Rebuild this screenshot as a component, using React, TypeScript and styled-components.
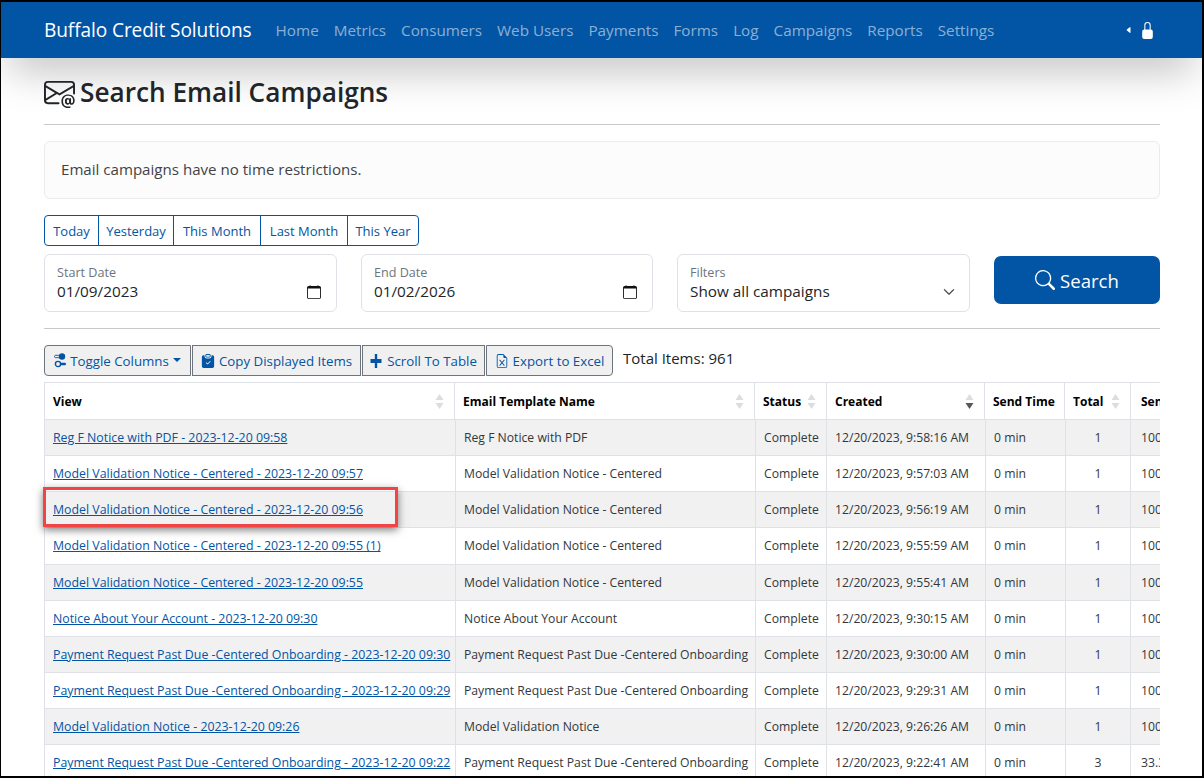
import React from "react";
import styled, { createGlobalStyle } from "styled-components";
import { BsEnvelopeAt, BsClipboardCheckFill, BsFileEarmarkExcel, BsSearch, BsLockFill, BsCaretLeftFill, BsChevronDown, BsCalendar } from "react-icons/bs";

const FONT = `"Open Sans", "Noto Sans", sans-serif`;

const Global = createGlobalStyle`
  html, body { margin: 0; padding: 0; background: #fff; overflow: hidden; }
  * { box-sizing: border-box; }
`;

const Frame = styled.div`
  width: 1204px;
  height: 778px;
  border-style: solid;
  border-color: #000;
  border-width: 2px 2px 2px 1px;
  overflow: hidden;
  font-family: ${FONT};
  color: #212529;
  background: #fff;
  display: flex;
  flex-direction: column;
`;

const NavBar = styled.nav`
  flex: 0 0 56px;
  background: #0254a4;
  display: flex;
  align-items: center;
  padding: 0 0 0 43px;
  box-shadow: 0 20px 42px -8px rgba(0, 0, 0, 0.26);
`;

const Brand = styled.span`
  color: #fff;
  font-size: 19.1px;
  letter-spacing: -0.1px;
  margin-right: 24px;
`;

const NavLink = styled.span`
  color: rgba(255, 255, 255, 0.55);
  font-size: 15.25px;
  margin-right: 15px;
`;

const NavRight = styled.div`
  margin-left: auto;
  display: flex;
  align-items: center;
  color: #fff;
  gap: 6px;
  padding-right: 46px;
`;

const Main = styled.main`
  padding: 0 42px 0 43px;
  display: flex;
  flex-direction: column;
`;

const Title = styled.h1`
  margin: 16px 0 0;
  font-size: 26.2px;
  line-height: 36px;
  font-weight: 600;
  color: #212529;
  display: flex;
  align-items: center;
  gap: 5px;
`;

const Rule = styled.hr<{ $top: number }>`
  width: 100%;
  border: 0;
  border-top: 1px solid #c9c9c9;
  margin: ${(p) => p.$top}px 0 16px;
`;

const Note = styled.div`
  height: 58px;
  border: 1px solid #e9ebee;
  border-radius: 6px;
  background: #fcfcfc;
  display: flex;
  align-items: center;
  padding: 0 16px 2px;
  font-size: 15.1px;
  color: #3f4347;
  margin-bottom: 16px;
`;

const RangeGroup = styled.div`
  display: inline-flex;
  align-self: flex-start;
  height: 31px;
  border: 1px solid #0254a4;
  border-radius: 4px;
  overflow: hidden;
`;

const RangeButton = styled.span<{ $w: number }>`
  width: ${(p) => p.$w}px;
  display: flex;
  align-items: center;
  justify-content: center;
  color: #0254a4;
  font-size: 13px;
  & + & { border-left: 1px solid #0254a4; }
`;

const FieldRow = styled.div`
  display: grid;
  grid-template-columns: 293px 292px 293px 166px;
  gap: 24px;
  margin-top: 8px;
  align-items: start;
`;

const Field = styled.div<{ $right: number }>`
  height: 58px;
  border: 1px solid #dee2e6;
  border-radius: 6px;
  padding: 9px ${(p) => p.$right}px 0 12px;
`;

const FieldLabel = styled.div`
  font-size: 12.6px;
  line-height: 17px;
  color: #6c757d;
`;

const FieldValue = styled.div`
  font-size: 15.3px;
  line-height: 21px;
  color: #212529;
  display: flex;
  align-items: center;
  justify-content: space-between;
`;

const SearchButton = styled.div`
  height: 48px;
  margin-top: 2px;
  background: #0254a4;
  border-radius: 7px;
  color: #fff;
  font-size: 18.6px;
  display: flex;
  align-items: center;
  justify-content: center;
  gap: 5px;
`;

const Toolbar = styled.div`
  display: flex;
  align-items: flex-start;
  height: 37px;
`;

const ToolButton = styled.span<{ $w: number; $first?: boolean; $last?: boolean; $gap?: number }>`
  width: ${(p) => p.$w}px;
  height: 31px;
  margin-right: 1px;
  background: #f0f0f1;
  border: 1px solid #6c757d;
  border-radius: ${(p) => (p.$first ? "4px 0 0 4px" : p.$last ? "0 4px 4px 0" : "0")};
  color: #0254a4;
  font-size: 13.3px;
  display: flex;
  align-items: center;
  justify-content: center;
  gap: ${(p) => p.$gap ?? 4}px;
  white-space: nowrap;
`;

const Caret = styled.span`
  width: 0;
  height: 0;
  border-left: 4px solid transparent;
  border-right: 4px solid transparent;
  border-top: 4px solid #0254a4;
  position: relative;
  top: -1px;
`;

const TotalItems = styled.span`
  font-size: 15px;
  margin-left: 9px;
  line-height: 27px;
  color: #212529;
`;

const TableWrap = styled.div`
  overflow: hidden;
  width: 100%;
`;

const Table = styled.table`
  table-layout: fixed;
  border-collapse: collapse;
  width: 1200px;
  font-size: 12.2px;
`;

const BodyTable = styled(Table)`
  margin-top: -1px;
`;

const Th = styled.th<{ $pad?: number }>`
  height: 37px;
  border: 1px solid #dee2e6;
  text-align: left;
  padding: 0 8px 0 ${(p) => p.$pad ?? 8}px;
  font-size: 12px;
  font-weight: 700;
  color: #000;
  position: relative;
  white-space: nowrap;
`;

const SortMark = styled.svg`
  position: absolute;
  right: 10px;
  top: 10px;
  width: 9px;
  height: 17px;
`;

const Row = styled.tr<{ $odd: boolean }>`
  height: 36.15px;
  background: ${(p) => (p.$odd ? "#f1f1f2" : "#fff")};
`;

const Td = styled.td<{ $center?: boolean; $pad?: number }>`
  border: 1px solid #dee2e6;
  padding: 0 8px 0 ${(p) => p.$pad ?? 8}px;
  white-space: nowrap;
  overflow: hidden;
  color: #33373b;
  text-align: ${(p) => (p.$center ? "center" : "left")};
`;

const Link = styled.a`
  color: #0254a4;
  font-size: 12.35px;
  text-decoration: underline;
`;

const TableArea = styled.div`
  position: relative;
`;

const Callout = styled.div`
  position: absolute;
  left: -1px;
  top: 105px;
  width: 355px;
  height: 40px;
  border: 3px solid #f24444;
  box-shadow: 0 3px 8px rgba(0, 0, 0, 0.5);
`;

const ToggleIcon = () => (
  <svg width="12" height="15" viewBox="0 0 12 15" fill="none">
    <circle cx="8" cy="3.5" r="3.2" fill="#0254a4" />
    <rect x="0.5" y="2.3" width="5" height="2.4" rx="1.2" stroke="#0254a4" strokeWidth="0.9" />
    <circle cx="4" cy="11" r="2.6" stroke="#0254a4" strokeWidth="1.4" />
    <rect x="6.5" y="9.8" width="5.5" height="2.4" rx="1.2" fill="#0254a4" />
  </svg>
);

const ScrollIcon = () => (
  <svg width="12" height="14" viewBox="0 0 12 14">
    <rect x="0.5" y="5" width="11" height="4" fill="#0254a4" />
    <rect x="4.8" y="0" width="2.4" height="14" fill="#0254a4" />
  </svg>
);

const Sort = ({ down }: { down?: boolean }) => (
  <SortMark viewBox="0 0 9 17">
    <path d="M4.5 1 L8.5 7 L0.5 7 Z" fill="#dcdde0" />
    <path d="M0.5 10 L8.5 10 L4.5 16 Z" fill={down ? "#55595e" : "#dcdde0"} />
  </SortMark>
);

const navItems = ["Home", "Metrics", "Consumers", "Web Users", "Payments", "Forms", "Log", "Campaigns", "Reports", "Settings"];
const ranges: [string, number][] = [["Today", 53], ["Yesterday", 75], ["This Month", 87], ["Last Month", 87], ["This Year", 71]];

const rows: [string, string, string, string, string][] = [
  ["Reg F Notice with PDF - 2023-12-20 09:58", "Reg F Notice with PDF", "12/20/2023, 9:58:16 AM", "1", "100"],
  ["Model Validation Notice - Centered - 2023-12-20 09:57", "Model Validation Notice - Centered", "12/20/2023, 9:57:03 AM", "1", "100"],
  ["Model Validation Notice - Centered - 2023-12-20 09:56", "Model Validation Notice - Centered", "12/20/2023, 9:56:19 AM", "1", "100"],
  ["Model Validation Notice - Centered - 2023-12-20 09:55 (1)", "Model Validation Notice - Centered", "12/20/2023, 9:55:59 AM", "1", "100"],
  ["Model Validation Notice - Centered - 2023-12-20 09:55", "Model Validation Notice - Centered", "12/20/2023, 9:55:41 AM", "1", "100"],
  ["Notice About Your Account - 2023-12-20 09:30", "Notice About Your Account", "12/20/2023, 9:30:15 AM", "1", "100"],
  ["Payment Request Past Due -Centered Onboarding - 2023-12-20 09:30", "Payment Request Past Due -Centered Onboarding", "12/20/2023, 9:30:00 AM", "1", "100"],
  ["Payment Request Past Due -Centered Onboarding - 2023-12-20 09:29", "Payment Request Past Due -Centered Onboarding", "12/20/2023, 9:29:31 AM", "1", "100"],
  ["Model Validation Notice - 2023-12-20 09:26", "Model Validation Notice", "12/20/2023, 9:26:26 AM", "1", "100"],
  ["Payment Request Past Due -Centered Onboarding - 2023-12-20 09:22", "Payment Request Past Due -Centered Onboarding", "12/20/2023, 9:22:41 AM", "3", "33.3"],
];

const headCols = [410, 300, 72, 158, 80, 66, 114];
const bodyCols = [411, 300, 71, 159, 80, 65, 114];

const Cols = ({ widths }: { widths: number[] }) => (
  <colgroup>
    {widths.map((c, i) => <col key={i} style={{ width: c }} />)}
  </colgroup>
);

export default function App() {
  return (
    <Frame>
      <Global />
      <NavBar>
        <Brand>Buffalo Credit Solutions</Brand>
        {navItems.map((n) => <NavLink key={n}>{n}</NavLink>)}
        <NavRight>
          <BsCaretLeftFill size={8} />
          <BsLockFill size={17} />
        </NavRight>
      </NavBar>
      <Main>
        <Title><BsEnvelopeAt size={31} />Search Email Campaigns</Title>
        <Rule $top={14} />
        <Note>Email campaigns have no time restrictions.</Note>
        <RangeGroup>
          {ranges.map(([r, w]) => <RangeButton key={r} $w={w}>{r}</RangeButton>)}
        </RangeGroup>
        <FieldRow>
          <Field $right={15}>
            <FieldLabel>Start Date</FieldLabel>
            <FieldValue>01/09/2023 <BsCalendar size={14} color="#111" /></FieldValue>
          </Field>
          <Field $right={15}>
            <FieldLabel>End Date</FieldLabel>
            <FieldValue>01/02/2026 <BsCalendar size={14} color="#111" /></FieldValue>
          </Field>
          <Field $right={14}>
            <FieldLabel>Filters</FieldLabel>
            <FieldValue>Show all campaigns <BsChevronDown size={12} color="#343a40" strokeWidth={0.8} /></FieldValue>
          </Field>
          <SearchButton><BsSearch size={20} />Search</SearchButton>
        </FieldRow>
        <Rule $top={16} />
        <Toolbar>
          <ToolButton $w={147} $first><ToggleIcon />Toggle Columns<Caret /></ToolButton>
          <ToolButton $w={169}><BsClipboardCheckFill size={14} />Copy Displayed Items</ToolButton>
          <ToolButton $w={123} $gap={5}><ScrollIcon />Scroll To Table</ToolButton>
          <ToolButton $w={127} $last><BsFileEarmarkExcel size={14} />Export to Excel</ToolButton>
          <TotalItems>Total Items: 961</TotalItems>
        </Toolbar>
        <TableArea>
          <TableWrap>
            <Table>
              <Cols widths={headCols} />
              <thead>
                <tr>
                  <Th>View<Sort /></Th>
                  <Th>Email Template Name<Sort /></Th>
                  <Th>Status<Sort /></Th>
                  <Th>Created<Sort down /></Th>
                  <Th>Send Time</Th>
                  <Th>Total<Sort /></Th>
                  <Th $pad={10}>Sent</Th>
                </tr>
              </thead>
            </Table>
            <BodyTable>
              <Cols widths={bodyCols} />
              <tbody>
                {rows.map((r, i) => (
                  <Row key={i} $odd={i % 2 === 0}>
                    <Td><Link>{r[0]}</Link></Td>
                    <Td>{r[1]}</Td>
                    <Td>Complete</Td>
                    <Td>{r[2]}</Td>
                    <Td>0 min</Td>
                    <Td $center>{r[3]}</Td>
                    <Td $pad={10}>{r[4]}</Td>
                  </Row>
                ))}
              </tbody>
            </BodyTable>
          </TableWrap>
          <Callout />
        </TableArea>
      </Main>
    </Frame>
  );
}
